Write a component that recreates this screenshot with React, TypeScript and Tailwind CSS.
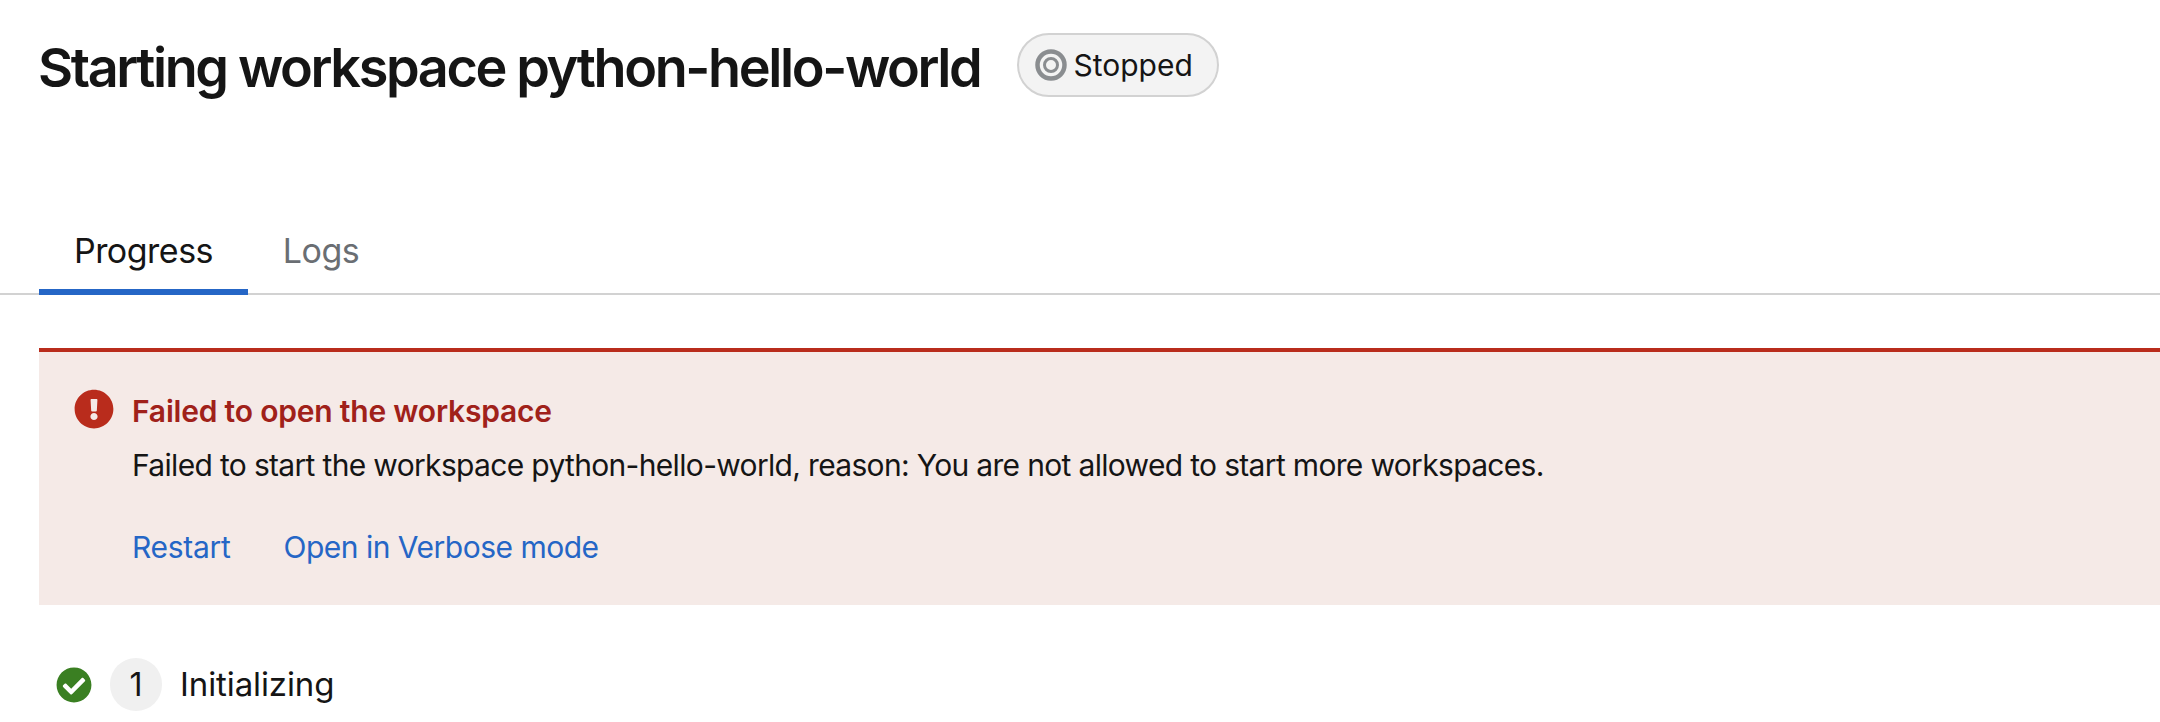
import { FaCheckCircle, FaExclamationCircle } from 'react-icons/fa';

const fontStack = { fontFamily: 'Inter, "Noto Sans", sans-serif' };

function StoppedIcon() {
  return (
    <svg viewBox="0 0 32 32" className="h-8 w-8 shrink-0" aria-hidden="true">
      <circle cx="16" cy="16" r="13.5" fill="none" stroke="#8a8d90" strokeWidth="4.5" />
      <circle cx="16" cy="16" r="6.5" fill="none" stroke="#8a8d90" strokeWidth="3" />
    </svg>
  );
}

export default function App() {
  return (
    <div className="h-[722px] w-[2160px] overflow-hidden bg-white text-[#151515]" style={fontStack}>
      {/* Header */}
      <div className="flex h-[130px] items-start pl-[38px] pt-[33px]">
        <h1 className="pt-[1px] text-[54px] font-semibold leading-[68px] tracking-[-2.4px]">
          Starting workspace python-hello-world
        </h1>
        <div className="ml-[37px] flex h-16 w-[202px] items-center gap-[6px] rounded-full border-2 border-[#d2d2d2] bg-[#f3f3f3] pl-4 text-[30px]">
          <StoppedIcon />
          <span>Stopped</span>
        </div>
      </div>

      {/* Tabs */}
      <div className="mt-[91px] flex h-[74px] border-b-2 border-[#d2d2d2] pl-[39px] text-[34px]">
        <div className="-mb-[2px] flex w-[209px] items-start justify-center border-b-[6px] border-[#2566c6] pt-[8px] leading-[44px] tracking-[-0.5px]">
          Progress
        </div>
        <div className="flex w-[146px] items-start justify-center pt-[8px] leading-[44px] tracking-[-0.5px] text-[#6a6e73]">
          Logs
        </div>
      </div>

      {/* Alert */}
      <div className="ml-[39px] mt-[53px] h-[257px] border-t-4 border-[#b92c1c] bg-[#f5eae7] pl-[35px] pt-[37px]">
        <div className="flex items-start">
          <FaExclamationCircle className="h-10 w-10 shrink-0 text-[#b92c1c]" />
          <div className="ml-[18px] mt-[3px] text-[30px] font-semibold leading-[38px] tracking-[-0.2px] text-[#a0211a]">
            Failed to open the workspace
          </div>
        </div>
        <p className="ml-[58px] mt-[15px] text-[30px] leading-[40px] tracking-[-0.67px]">
          Failed to start the workspace python-hello-world, reason: You are not allowed to start more workspaces.
        </p>
        <div className="ml-[58px] mt-[42px] flex gap-[53px] text-[30px] leading-[40px] tracking-[-0.3px] text-[#2566c6]">
          <a>Restart</a>
          <a className="tracking-[-0.5px]">Open in Verbose mode</a>
        </div>
      </div>

      {/* Progress step */}
      <div className="mt-[53px] flex items-center pl-[56px]">
        <FaCheckCircle className="h-9 w-9 shrink-0 text-[#3a7f22]" />
        <div className="ml-[18px] flex h-[53px] w-[52px] items-center justify-center rounded-full bg-[#f0f0f0] text-[32px]">
          1
        </div>
        <span className="ml-[18px] text-[33px] tracking-[-0.1px]">Initializing</span>
      </div>
    </div>
  );
}
